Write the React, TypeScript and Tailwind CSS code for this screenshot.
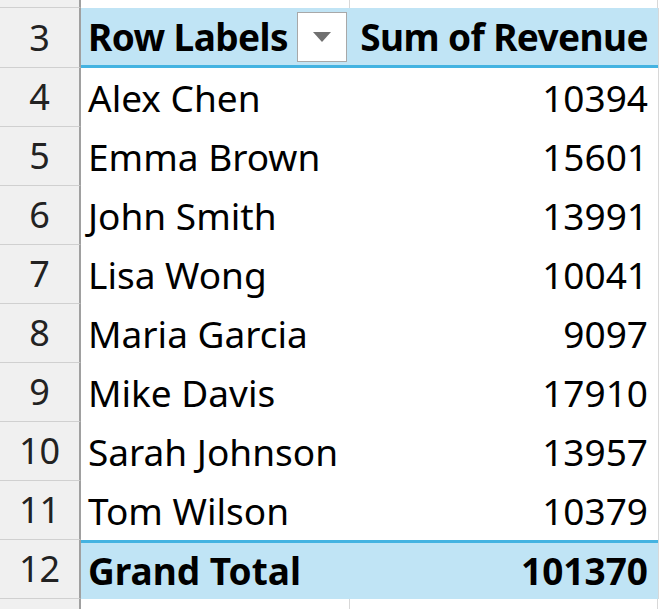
import React from "react";

const rows: [string, string][] = [
  ["Alex Chen", "10394"],
  ["Emma Brown", "15601"],
  ["John Smith", "13991"],
  ["Lisa Wong", "10041"],
  ["Maria Garcia", "9097"],
  ["Mike Davis", "17910"],
  ["Sarah Johnson", "13957"],
  ["Tom Wilson", "10379"],
];

const font = { fontFamily: '"Noto Sans", "Open Sans", Arial, sans-serif' };

function Hdr({ n, h = "h-[59px]" }: { n?: string; h?: string }) {
  return (
    <div className={`${h} w-[81px] shrink-0 bg-[#f0f0f0] border-r-[2px] border-r-[#a0a0a0] border-b border-b-[#d0d0d0] flex items-center justify-center text-[36px] text-[#222]`}>
      {n}
    </div>
  );
}

export default function App() {
  return (
    <div className="w-[664px] h-[609px] overflow-hidden bg-white text-black" style={font}>
      <div className="flex h-[8px]">
        <Hdr h="h-[8px]" />
        <div className="w-[269px] border-r border-[#d8d8d8]" />
        <div className="w-[308px] border-r border-[#d8d8d8]" />
      </div>
      <div className="flex h-[60px]">
        <Hdr n="3" h="h-[60px]" />
        <div className="w-[577px] bg-[#c0e4f5] border-b-[3px] border-[#44b3e1] flex items-center">
          <div className="w-[269px] flex items-center pl-[7px] pr-[3px] justify-between">
            <span className="text-[37px] font-bold tracking-[-0.6px] whitespace-nowrap">Row Labels</span>
            <div className="w-[50px] h-[50px] shrink-0 bg-white border border-[#a8a8a8] flex items-center justify-center">
              <svg width="18" height="10" viewBox="0 0 18 10"><polygon points="0,0 18,0 9,10" fill="#707070" /></svg>
            </div>
          </div>
          <div className="flex-1 text-right pr-[10px] text-[37px] font-bold tracking-[-0.6px] whitespace-nowrap">Sum of Revenue</div>
        </div>
        <div className="w-[6px] border-l border-[#d8d8d8]" />
      </div>
      {rows.map(([name, v], i) => (
        <div key={name} className="flex h-[59px]">
          <Hdr n={String(i + 4)} />
          <div className="w-[577px] flex items-center text-[37px]">
            <div className="w-[269px] pl-[7px] whitespace-nowrap">{name}</div>
            <div className="flex-1 text-right pr-[10px]">{v}</div>
          </div>
          <div className="w-[6px] border-l border-[#d8d8d8]" />
        </div>
      ))}
      <div className="flex h-[59px]">
        <Hdr n="12" />
        <div className="w-[577px] bg-[#c0e4f5] border-t-[3px] border-[#44b3e1] flex items-center text-[37px] font-bold">
          <div className="w-[269px] pl-[7px] whitespace-nowrap">Grand Total</div>
          <div className="flex-1 text-right pr-[10px]">101370</div>
        </div>
        <div className="w-[6px] border-l border-[#d8d8d8]" />
      </div>
      <div className="flex h-[12px]">
        <Hdr h="h-[12px]" />
        <div className="w-[269px] border-r border-[#d8d8d8]" />
        <div className="w-[308px] border-r border-[#d8d8d8]" />
      </div>
    </div>
  );
}
